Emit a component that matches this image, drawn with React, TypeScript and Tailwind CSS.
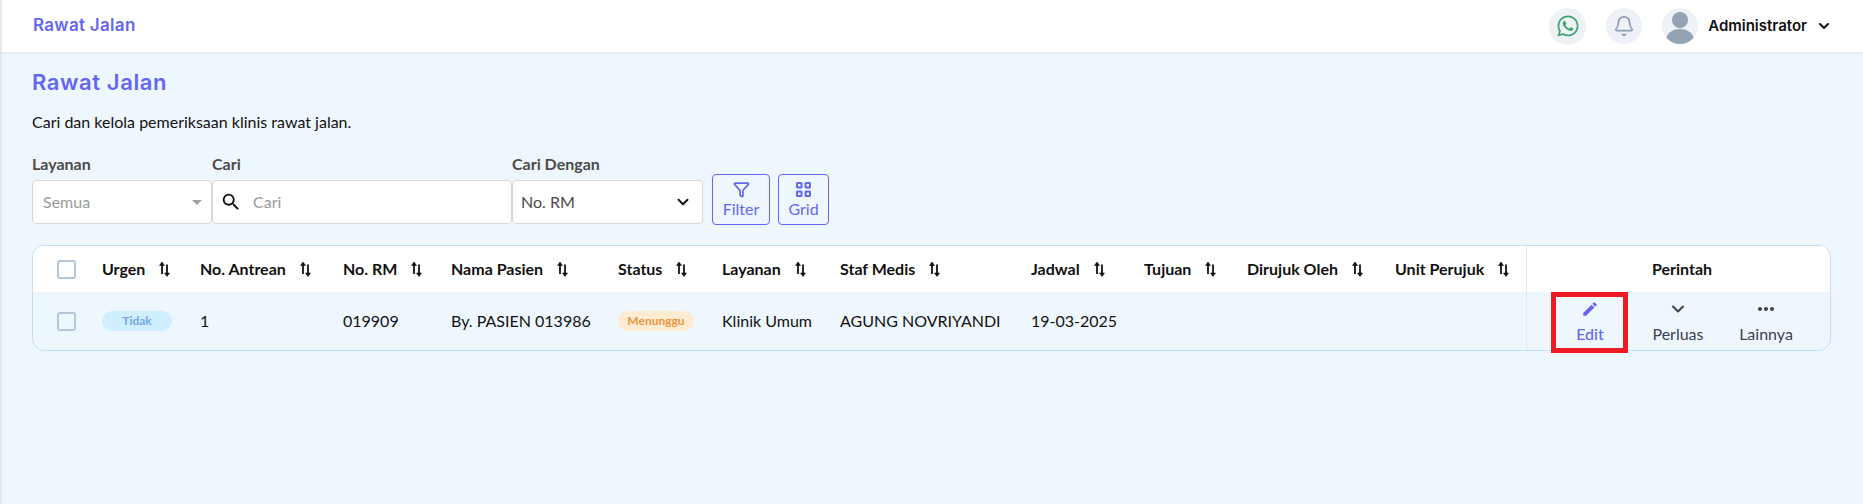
import React from 'react';
import { Bell, ChevronDown, Funnel } from 'lucide-react';
import { FaWhatsapp } from 'react-icons/fa';
import { MdEdit, MdMoreHoriz, MdSearch } from 'react-icons/md';

const COLS = 'grid grid-cols-[69px_98px_143px_108px_167px_104px_118px_191px_113px_103px_148px_131px_1fr]';

const HEADERS = ['Urgen', 'No. Antrean', 'No. RM', 'Nama Pasien', 'Status', 'Layanan', 'Staf Medis', 'Jadwal', 'Tujuan', 'Dirujuk Oleh', 'Unit Perujuk'];

const SortIcon = () => (
  <svg width="11" height="16" viewBox="0 0 11 16" className="ml-[14px] shrink-0 -mt-[1px]">
    <path d="M3 13V3" stroke="#111" strokeWidth="1.8" />
    <path d="M0.5 4.5L3 1L5.5 4.5Z" fill="#111" stroke="#111" strokeWidth="0.6" />
    <path d="M8 3.5V13.5" stroke="#111" strokeWidth="1.8" />
    <path d="M5.5 12L8 15.5L10.5 12Z" fill="#111" stroke="#111" strokeWidth="0.6" />
  </svg>
);

const Checkbox = () => (
  <div className="w-[19px] h-[19px] rounded-[3px] border-2 border-[#b3c6da] bg-transparent ml-[24px]" />
);

const Action = ({ icon, label, active }: { icon: React.ReactNode; label: string; active?: boolean }) => (
  <div className={`w-[88px] flex flex-col items-center ${active ? 'text-[#6366f1] font-medium' : 'text-[#374151]'}`}>
    <div className="h-[18px] flex items-center justify-center">{icon}</div>
    <span className="text-[16px] leading-[18px] mt-[7px]">{label}</span>
  </div>
);

const App: React.FC = () => {
  return (
    <div className="relative w-full h-[504px] overflow-hidden bg-[#eff7fe] text-[#111] font-['Lato',sans-serif]">
      <div className="absolute left-0 top-0 bottom-0 w-[3px] bg-gradient-to-r from-[#dfe3e8] to-transparent" />

      <header className="h-[52px] bg-white flex items-center pl-[33px] pr-[31px] shadow-[0_1px_3px_rgba(120,130,150,0.15)]">
        <span className="text-[17px] font-semibold tracking-[0.3px] text-[#6366f1] font-['Inter',sans-serif]">Rawat Jalan</span>
        <div className="ml-auto flex items-center">
          <div className="w-[37px] h-[37px] rounded-full bg-[#eef1f6] flex items-center justify-center">
            <FaWhatsapp size={24} className="text-[#3fa66f]" />
          </div>
          <div className="w-[36px] h-[36px] rounded-full bg-[#eef1f6] flex items-center justify-center ml-[20px]">
            <Bell size={22} strokeWidth={1.8} className="text-[#8a9bb3]" />
          </div>
          <div className="w-[36px] h-[36px] rounded-full bg-[#eef1f6] overflow-hidden ml-[20px]">
            <svg viewBox="0 0 36 36" width="36" height="36">
              <circle cx="18" cy="12" r="8" fill="#94a3b3" />
              <ellipse cx="18" cy="32" rx="14" ry="11" fill="#94a3b3" />
            </svg>
          </div>
          <span className="ml-[10px] text-[15px] font-semibold font-['Inter',sans-serif]">Administrator</span>
          <ChevronDown size={16} strokeWidth={3} className="ml-[9px]" />
        </div>
      </header>

      <main className="pl-[32px] pr-[32px]">
        <h1 className="mt-[16px] text-[22px] leading-[28px] font-semibold tracking-[0.6px] text-[#6366f1] font-['Inter',sans-serif]">Rawat Jalan</h1>
        <p className="mt-[16px] text-[16px] leading-[20px] text-[#111]">Cari dan kelola pemeriksaan klinis rawat jalan.</p>

        <div className="mt-[23px] flex items-end h-[69px]">
          <div className="w-[180px]">
            <div className="text-[16px] leading-[18px] font-bold text-[#4b4b4b] h-[25px]">Layanan</div>
            <div className="h-[44px] bg-white border border-[#d4d7dc] rounded-[4px] flex items-center pl-[10px] pr-[9px]">
              <span className="text-[16px] text-[#9a9a9a]">Semua</span>
              <span className="ml-auto w-0 h-0 border-x-[5px] border-x-transparent border-t-[5px] border-t-[#a3a3a3]" />
            </div>
          </div>
          <div className="w-[300px]">
            <div className="text-[16px] leading-[18px] font-bold text-[#4b4b4b] h-[25px]">Cari</div>
            <div className="h-[44px] bg-white border border-[#d4d7dc] rounded-[4px] flex items-center pl-[7px]">
              <MdSearch size={22} className="text-[#111]" />
              <span className="ml-[11px] text-[16px] text-[#9a9a9a]">Cari</span>
            </div>
          </div>
          <div className="w-[191px]">
            <div className="text-[16px] leading-[18px] font-bold text-[#4b4b4b] h-[25px]">Cari Dengan</div>
            <div className="h-[44px] bg-white border border-[#d4d7dc] rounded-[4px] flex items-center pl-[8px] pr-[10px]">
              <span className="text-[16px] text-[#4b4b4b]">No. RM</span>
              <ChevronDown size={18} strokeWidth={2.6} className="ml-auto text-[#111]" />
            </div>
          </div>
          <button className="ml-[9px] w-[58px] h-[51px] -mb-[1px] border border-[#6366f1] rounded-[4px] flex flex-col items-center justify-center text-[#6366f1]">
            <Funnel size={17} strokeWidth={2.4} />
            <span className="text-[16px] leading-[18px] mt-[2px]">Filter</span>
          </button>
          <button className="ml-[8px] w-[51px] h-[51px] -mb-[1px] border border-[#6366f1] rounded-[4px] flex flex-col items-center justify-center text-[#6366f1]">
            <svg width="15" height="15" viewBox="0 0 15 15" fill="none" stroke="currentColor" strokeWidth="2">
              <rect x="1" y="1" width="4.5" height="4.5" rx="0.5" />
              <rect x="9.5" y="1" width="4.5" height="4.5" rx="0.5" />
              <rect x="1" y="9.5" width="4.5" height="4.5" rx="0.5" />
              <rect x="9.5" y="9.5" width="4.5" height="4.5" rx="0.5" />
            </svg>
            <span className="text-[16px] leading-[18px] mt-[3px]">Grid</span>
          </button>
        </div>

        <div className="mt-[21px] w-[1799px] border border-[#c5def5] rounded-[12px] overflow-hidden">
          <div className={`${COLS} h-[46px] bg-white items-center`}>
            <Checkbox />
            {HEADERS.map(h => (
              <div key={h} className="flex items-center text-[16px] font-bold">
                <span>{h}</span>
                <SortIcon />
              </div>
            ))}
            <div className="h-full flex items-center justify-center pl-[7px] text-[16px] font-bold border-l border-[#dcebf8]">Perintah</div>
          </div>
          <div className={`${COLS} h-[58px] items-center text-[16px]`}>
            <Checkbox />
            <div>
              <span className="w-[70px] h-[20px] rounded-full bg-[#cfeeff] text-[#75a7e6] text-[12px] font-bold flex items-center justify-center">Tidak</span>
            </div>
            <div>1</div>
            <div>019909</div>
            <div>By. PASIEN 013986</div>
            <div>
              <span className="w-[76px] h-[20px] rounded-full bg-[#fdecd2] text-[#ee9440] text-[12px] font-bold flex items-center justify-center">Menunggu</span>
            </div>
            <div>Klinik Umum</div>
            <div>AGUNG NOVRIYANDI</div>
            <div>19-03-2025</div>
            <div />
            <div />
            <div />
            <div className="h-full flex items-center pl-[19px] border-l border-[#dcebf8]">
              <Action active label="Edit" icon={<MdEdit size={18} />} />
              <Action label="Perluas" icon={<ChevronDown size={20} strokeWidth={2.4} />} />
              <Action label="Lainnya" icon={<MdMoreHoriz size={24} />} />
            </div>
          </div>
        </div>
      </main>

      <div className="absolute left-[1551px] top-[292px] w-[77px] h-[61px] border-[5px] border-[#ed1c24]" />
    </div>
  );
};

export default App;
